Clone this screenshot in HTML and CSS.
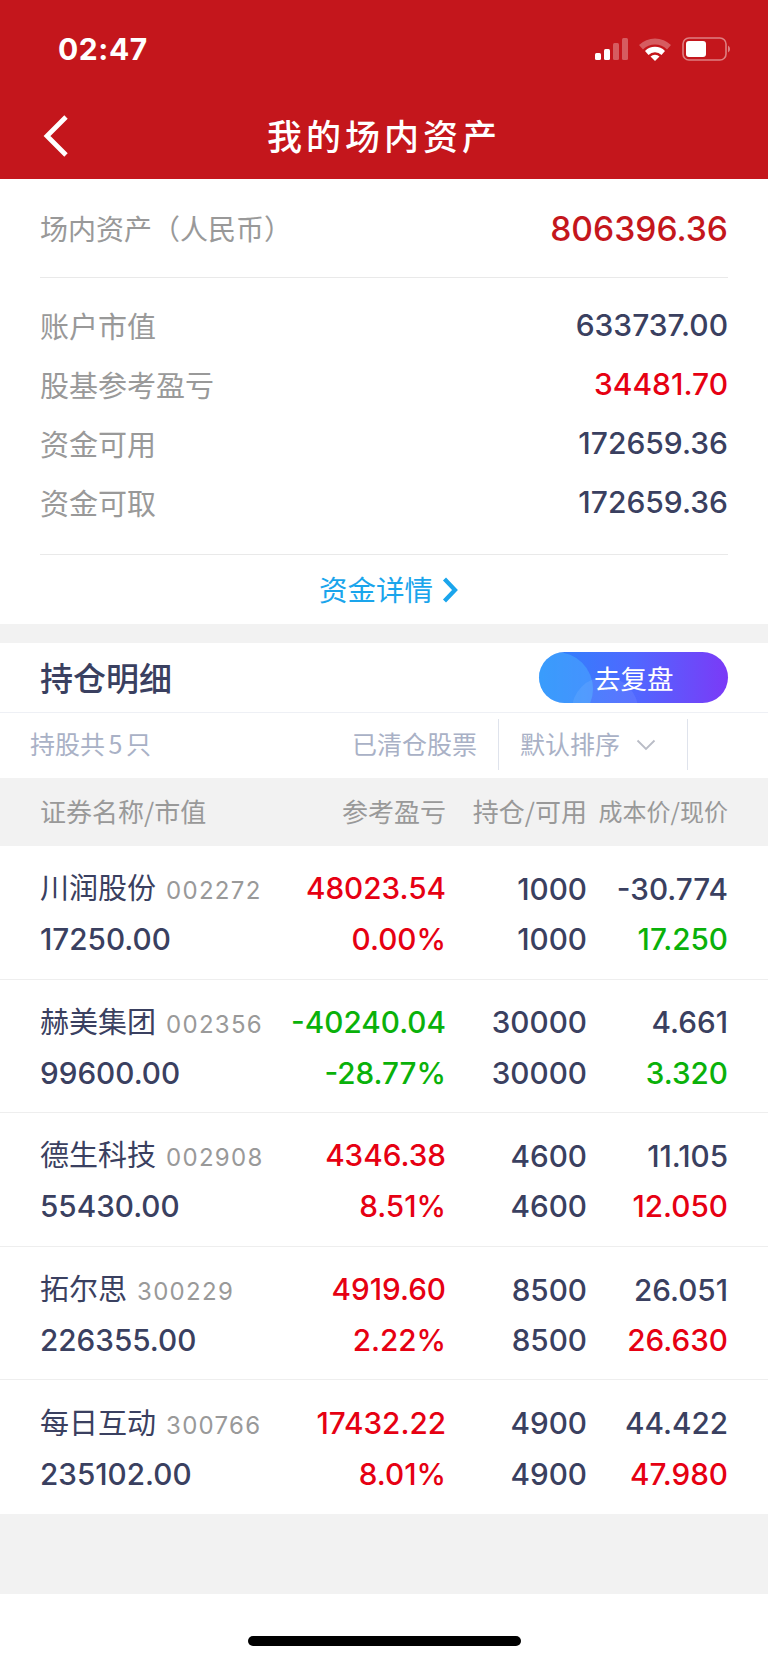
FILE: index.html
```html
<!DOCTYPE html>
<html lang="zh-CN">
<head>
<meta charset="utf-8">
<meta name="viewport" content="width=device-width, initial-scale=1">
<link rel="stylesheet" href="styles.css">
<title>我的场内资产</title>
</head>
<body>
<div class="head">
  <div class="status">
    <span class="time">02:47</span>
    <div class="status_icons">
      <svg class="ic_signal" width="33" height="22" viewBox="0 0 33 22">
        <rect x="0" y="15" width="6" height="7" rx="1.5" fill="#fff"/>
        <rect x="9" y="11" width="6" height="11" rx="1.5" fill="#fff"/>
        <rect x="18" y="5" width="6" height="17" rx="1.5" fill="#fff" fill-opacity="0.3"/>
        <rect x="27" y="0" width="6" height="22" rx="1.5" fill="#fff" fill-opacity="0.3"/>
      </svg>
      <svg class="ic_wifi" width="32" height="23" viewBox="0 0 32 23">
        <path d="M0 7 A23 23 0 0 1 32 7 L28 11.5 A17 17 0 0 0 4 11.5 Z" fill="#fff" fill-opacity="0.3"/>
        <path d="M6 13 A14 14 0 0 1 26 13 L22.5 17 A9 9 0 0 0 9.5 17 Z" fill="#fff"/>
        <path d="M11.5 18.5 A6.5 6.5 0 0 1 20.5 18.5 L16 23 Z" fill="#fff"/>
      </svg>
      <svg class="ic_batt" width="50" height="24" viewBox="0 0 50 24">
        <rect x="1" y="1" width="43" height="22" rx="6" fill="none" stroke="#fff" stroke-opacity="0.45" stroke-width="1.6"/>
        <rect x="4" y="4" width="20" height="16" rx="3" fill="#fff"/>
        <path d="M46 8.5 A4 4 0 0 1 46 15.5 Z" fill="#fff" fill-opacity="0.45"/>
      </svg>
    </div>
  </div>
  <div class="nav">
    <svg class="back" width="26" height="42" viewBox="0 0 26 42"><path d="M23 2 L4 21 L23 40" fill="none" stroke="#fff" stroke-width="4.8"/></svg>
    <span class="nav_title">我的场内资产</span>
  </div>
</div>

<div class="summary">
  <div class="total">
    <span class="total_label">场内资产（人民币）</span>
    <span class="total_val">806396.36</span>
  </div>
  <div class="stats">
    <div class="stat"><span class="stat_label">账户市值</span><span class="num">633737.00</span></div>
    <div class="stat"><span class="stat_label">股基参考盈亏</span><span class="num up">34481.70</span></div>
    <div class="stat"><span class="stat_label">资金可用</span><span class="num">172659.36</span></div>
    <div class="stat"><span class="stat_label">资金可取</span><span class="num">172659.36</span></div>
  </div>
  <div class="detail_link"><span class="detail_txt">资金详情</span>
    <svg width="16" height="26" viewBox="0 0 16 26"><path d="M2.5 2 L13 13 L2.5 24" fill="none" stroke="#1aa5ec" stroke-width="4.2"/></svg>
  </div>
</div>

<div class="holdings">
  <div class="hold_head">
    <span class="hold_title">持仓明细</span>
    <div class="review_btn"><span class="review_txt">去复盘</span></div>
  </div>
  <div class="filter">
    <span class="count">持股共 5 只</span>
    <span class="cleared">已清仓股票</span>
    <div class="sort"><span class="sort_txt">默认排序</span>
      <svg width="20" height="12" viewBox="0 0 20 12"><path d="M1.5 1.5 L10 10 L18.5 1.5" fill="none" stroke="#b9bcc6" stroke-width="1.8"/></svg>
    </div>
  </div>
  <div class="cols">
    <span class="col_name">证券名称/市值</span>
    <span class="col_pnl">参考盈亏</span>
    <span class="col_pos">持仓/可用</span>
    <span class="col_price">成本价/现价</span>
  </div>

  <div class="stock">
    <div class="line"><div class="first"><span class="name">川润股份<i class="code">002272</i></span><span class="up">48023.54</span></div><span>1000</span><span>-30.774</span></div>
    <div class="line"><div class="first"><span>17250.00</span><span class="up">0.00%</span></div><span>1000</span><span class="down">17.250</span></div>
  </div>
  <div class="stock">
    <div class="line"><div class="first"><span class="name">赫美集团<i class="code">002356</i></span><span class="down">-40240.04</span></div><span>30000</span><span>4.661</span></div>
    <div class="line"><div class="first"><span>99600.00</span><span class="down">-28.77%</span></div><span>30000</span><span class="down">3.320</span></div>
  </div>
  <div class="stock">
    <div class="line"><div class="first"><span class="name">德生科技<i class="code">002908</i></span><span class="up">4346.38</span></div><span>4600</span><span>11.105</span></div>
    <div class="line"><div class="first"><span>55430.00</span><span class="up">8.51%</span></div><span>4600</span><span class="up">12.050</span></div>
  </div>
  <div class="stock">
    <div class="line"><div class="first"><span class="name">拓尔思<i class="code">300229</i></span><span class="up">4919.60</span></div><span>8500</span><span>26.051</span></div>
    <div class="line"><div class="first"><span>226355.00</span><span class="up">2.22%</span></div><span>8500</span><span class="up">26.630</span></div>
  </div>
  <div class="stock">
    <div class="line"><div class="first"><span class="name">每日互动<i class="code">300766</i></span><span class="up">17432.22</span></div><span>4900</span><span>44.422</span></div>
    <div class="line"><div class="first"><span>235102.00</span><span class="up">8.01%</span></div><span>4900</span><span class="up">47.980</span></div>
  </div>
</div>

<div class="foot_gap"></div>
<div class="home"><div class="home_bar"></div></div>
</body>
</html>
```

FILE: styles.css
```css
*
{
	box-sizing: border-box;
}
html, body
{
	margin: 0;
	padding: 0;
}
body
{
	width: 768px;
	height: 1663px;
	overflow: hidden;
	background: #fff;
	color: #3a4060;
	font-family: Inter, "Noto Sans CJK SC", sans-serif;
}

/* chinese labels, so the line box is centred on the glyphs */
.nav_title, .total_label, .stat_label, .detail_link, .hold_title, .review_txt,
.filter, .cols, .name
{
	font-family: "Noto Sans CJK SC", Inter, sans-serif;
}

.head
{
	height: 179px;
	background: #c4161c;
	color: #fff;
}
.status
{
	height: 90px;
	padding: 8px 36px 0 58px;
	display: flex;
	justify-content: space-between;
	align-items: center;
}
.time
{
	font-size: 30px;
	font-weight: 700;
	letter-spacing: 0.6px;
}
.status_icons
{
	display: flex;
	align-items: center;
	gap: 11px;
}
.nav
{
	height: 89px;
	display: flex;
	align-items: center;
	justify-content: center;
	position: relative;
}
.back
{
	position: absolute;
	left: 43px;
	top: 25px;
}
.nav_title
{
	font-size: 35px;
	font-weight: 500;
	letter-spacing: 4px;
}

.summary
{
	padding: 0 40px;
	border-bottom: 19px solid #f2f2f2;
	height: 464px;
}
.total
{
	height: 99px;
	display: flex;
	justify-content: space-between;
	align-items: center;
	border-bottom: 1px solid #e9e9e9;
}
.total_label
{
	font-size: 28px;
	color: #999;
}
.total_val
{
	font-size: 33.6px;
	font-weight: 500;
	color: #c4161c;
}
.stats
{
	padding: 17px 0 23px;
	border-bottom: 1px solid #e9e9e9;
}
.stat
{
	height: 59px;
	display: flex;
	justify-content: space-between;
	align-items: center;
}
.stat_label
{
	font-size: 29px;
	color: #999;
}
.num
{
	font-size: 30px;
	font-weight: 500;
}
.up
{
	color: #e60012;
}
.down
{
	color: #0ab10a;
}
.detail_link
{
	height: 69px;
	padding-left: 9px;
	display: flex;
	align-items: center;
	justify-content: center;
	gap: 9px;
	font-size: 28.5px;
	color: #1aa5ec;
}
.detail_txt
{
	padding-bottom: 2px;
}

.hold_head
{
	height: 70px;
	padding: 0 40px;
	display: flex;
	justify-content: space-between;
	align-items: center;
	border-bottom: 1px solid #eef0f5;
}
.hold_title
{
	font-size: 33px;
	font-weight: 500;
	padding-bottom: 2px;
}
.review_btn
{
	width: 189px;
	height: 51px;
	border-radius: 26px;
	padding-left: 55px;
	font-size: 26.5px;
	color: #fff;
	background: linear-gradient(90deg, #2a86fb, #4f68ff 50%, #7b3af7);
	position: relative;
	overflow: hidden;
	display: flex;
	align-items: center;
}
.review_btn::before
{
	content: "";
	position: absolute;
	left: -20px;
	top: 0;
	width: 74px;
	height: 74px;
	border-radius: 50%;
	background: rgba(80, 190, 255, 0.4);
}
.review_btn::after
{
	content: "";
	position: absolute;
	left: 33px;
	top: 25px;
	width: 66px;
	height: 66px;
	border-radius: 50%;
	background: rgba(255, 255, 255, 0.08);
}
.review_txt
{
	position: relative;
	z-index: 1;
}

.filter
{
	height: 65px;
	padding: 6px 80px 8px 30px;
	display: flex;
	align-items: center;
	font-size: 25px;
	color: #a9b1c6;
}
.count
{
	flex: 1;
	word-spacing: -2px;
	padding-bottom: 3px;
}
.cleared
{
	margin-right: 21px;
	padding-bottom: 3px;
}
.sort
{
	width: 190px;
	height: 100%;
	padding-left: 21px;
	display: flex;
	align-items: center;
	gap: 16px;
	border-left: 1px solid #dfe3ec;
	border-right: 1px solid #dfe3ec;
}
.sort_txt
{
	padding-bottom: 3px;
}

.cols
{
	height: 68px;
	padding: 0 40px 3px;
	background: #f2f2f2;
	display: grid;
	grid-template-columns: 290px 116px 141px 141px;
	align-items: center;
	font-size: 26px;
	color: #999;
}
.col_pnl, .col_pos, .col_price
{
	text-align: right;
	white-space: nowrap;
}
.col_price
{
	font-size: 24px;
}

.stock
{
	height: 133.6px;
	padding: 17.5px 40px 0;
	border-bottom: 1px solid #eeeeee;
}
.stock:last-child
{
	border-bottom: 0;
}
.line
{
	height: 50.5px;
	display: grid;
	grid-template-columns: minmax(0, 1fr) 141px 141px;
	align-items: center;
	font-size: 29.7px;
	line-height: 38px;
	font-weight: 500;
	text-align: right;
}
.first
{
	display: flex;
	justify-content: space-between;
	align-items: baseline;
	text-align: left;
}
.name
{
	font-size: 29px;
	font-weight: 400;
}
.code
{
	margin-left: 10px;
	font-family: Inter, sans-serif;
	font-style: normal;
	font-weight: 400;
	font-size: 24px;
	letter-spacing: 1.3px;
	color: #999;
}

.foot_gap
{
	height: 80px;
	background: #f2f2f2;
}
.home
{
	height: 69px;
	padding-top: 42px;
}
.home_bar
{
	width: 273px;
	height: 10px;
	margin: 0 auto;
	border-radius: 5px;
	background: #000;
}
```
